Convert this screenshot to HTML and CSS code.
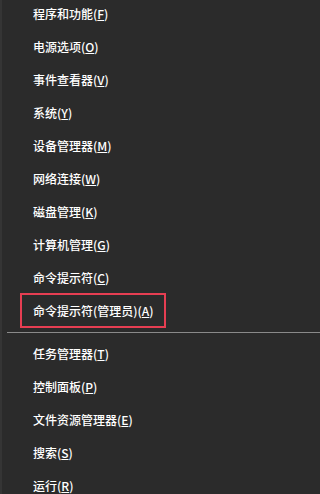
FILE: index.html
```html
<!DOCTYPE html>
<html lang="zh-CN">
<head>
<meta charset="utf-8">
<link rel="stylesheet" href="styles.css">
</head>
<body>
<div class="menu">
  <ul class="group">
    <li class="item">程序和功能(<u>F</u>)</li>
    <li class="item">电源选项(<u>O</u>)</li>
    <li class="item">事件查看器(<u>V</u>)</li>
    <li class="item">系统(<u>Y</u>)</li>
    <li class="item">设备管理器(<u>M</u>)</li>
    <li class="item">网络连接(<u>W</u>)</li>
    <li class="item">磁盘管理(<u>K</u>)</li>
    <li class="item">计算机管理(<u>G</u>)</li>
    <li class="item">命令提示符(<u>C</u>)</li>
    <li class="item highlight">命令提示符(管理员)(<u>A</u>)</li>
  </ul>
  <div class="sep"></div>
  <ul class="group">
    <li class="item">任务管理器(<u>T</u>)</li>
    <li class="item">控制面板(<u>P</u>)</li>
    <li class="item">文件资源管理器(<u>E</u>)</li>
    <li class="item">搜索(<u>S</u>)</li>
    <li class="item">运行(<u>R</u>)</li>
  </ul>
</div>
</body>
</html>
```

FILE: styles.css
```css
html, body {
  margin: 0;
  padding: 0;
  background: #2b2b2b;
  height: 100%;
  overflow: hidden;
}
.menu {
  margin-top: -3px;
  border-left: 2px solid #353535;
  min-height: 520px;
  font-family: "Noto Sans CJK SC", "Microsoft YaHei", sans-serif;
  font-size: 12px;
  font-weight: 500;
  color: #ffffff;
}
.group {
  list-style: none;
  margin: 0;
  padding: 0;
}
.item {
  position: relative;
  height: 33px;
  line-height: 33px;
  padding-left: 31px;
  white-space: nowrap;
}
.item u {
  text-decoration: underline;
  text-underline-offset: 1px;
}
.highlight::after {
  content: "";
  position: absolute;
  left: 18px;
  top: -1px;
  width: 146px;
  height: 35px;
  box-sizing: border-box;
  border: 2px solid #e63e52;
}
.sep {
  height: 10px;
  display: flex;
  align-items: center;
  padding-left: 5px;
}
.sep::before {
  content: "";
  flex: 1;
  height: 1px;
  background: #8a8a8a;
}
```
